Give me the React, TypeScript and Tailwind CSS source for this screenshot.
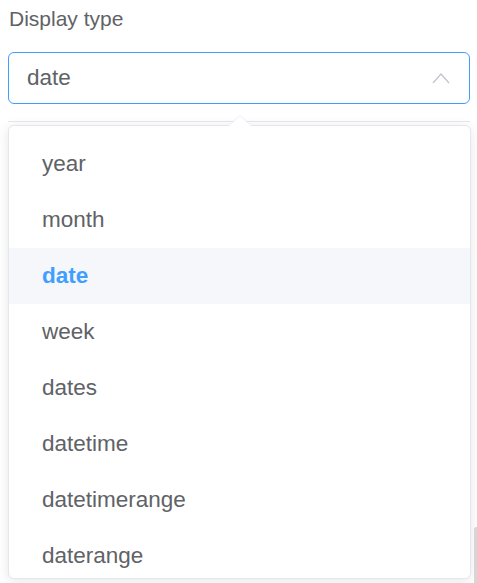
import React from 'react';

const options = ['year', 'month', 'date', 'week', 'dates', 'datetime', 'datetimerange', 'daterange'];

const ChevronUp = () => (
    <svg width="18" height="12" viewBox="0 0 18 12" fill="none">
        <path d="M1 11 L9 2 L17 11" stroke="#c0c4cc" strokeWidth="1.3" />
    </svg>
);

export default function App() {
    const selected = 'date';

    return (
        <div className="relative h-[583px] w-[477px] overflow-hidden bg-white px-[8px] font-['Liberation_Sans',Arial,sans-serif]">
            {/* Label */}
            <div className="mt-[7px] pl-[1px] text-[21px] leading-[24px] text-[#606266]">Display type</div>

            {/* Select input */}
            <div className="mt-[21px] flex h-[52px] w-[462px] items-center justify-between rounded-[6px] border-[1.5px] border-[#409eff] pl-[18px] pr-[19px]">
                <span className="text-[22.5px] text-[#606266]">date</span>
                <ChevronUp />
            </div>

            <div className="mt-[17px] h-px w-[462px] bg-[#e4e7ed]" />

            {/* Dropdown panel */}
            <div className="relative mt-[3px] h-[454px] w-[463px] rounded-[6px] border border-[#e4e7ed] bg-white shadow-[0_2px_12px_rgba(0,0,0,0.1)]">
                <svg className="absolute left-[218px] top-[-11px]" width="26" height="12" viewBox="0 0 26 12">
                    <polygon points="1,11.5 13,0.5 25,11.5" fill="#ffffff" />
                    <path d="M1 11.5 L13 0.5 L25 11.5" stroke="#ebeef5" strokeWidth="1" fill="none" />
                </svg>
                <div className="h-full overflow-hidden rounded-[6px] pt-[10px]">
                    {options.map((opt) => (
                        <div
                            key={opt}
                            className={`flex h-[56px] items-center pl-[33px] text-[22.5px] ${
                                opt === selected ? 'bg-[#f5f7fa] font-bold text-[#409eff]' : 'text-[#606266]'
                            }`}
                        >
                            {opt}
                        </div>
                    ))}
                </div>
            </div>

            {/* Page scrollbar hint */}
            <div className="absolute right-0 top-[527px] h-[60px] w-[3px] rounded-tl-[2px] bg-[#d6d6d6]" />
        </div>
    );
}
